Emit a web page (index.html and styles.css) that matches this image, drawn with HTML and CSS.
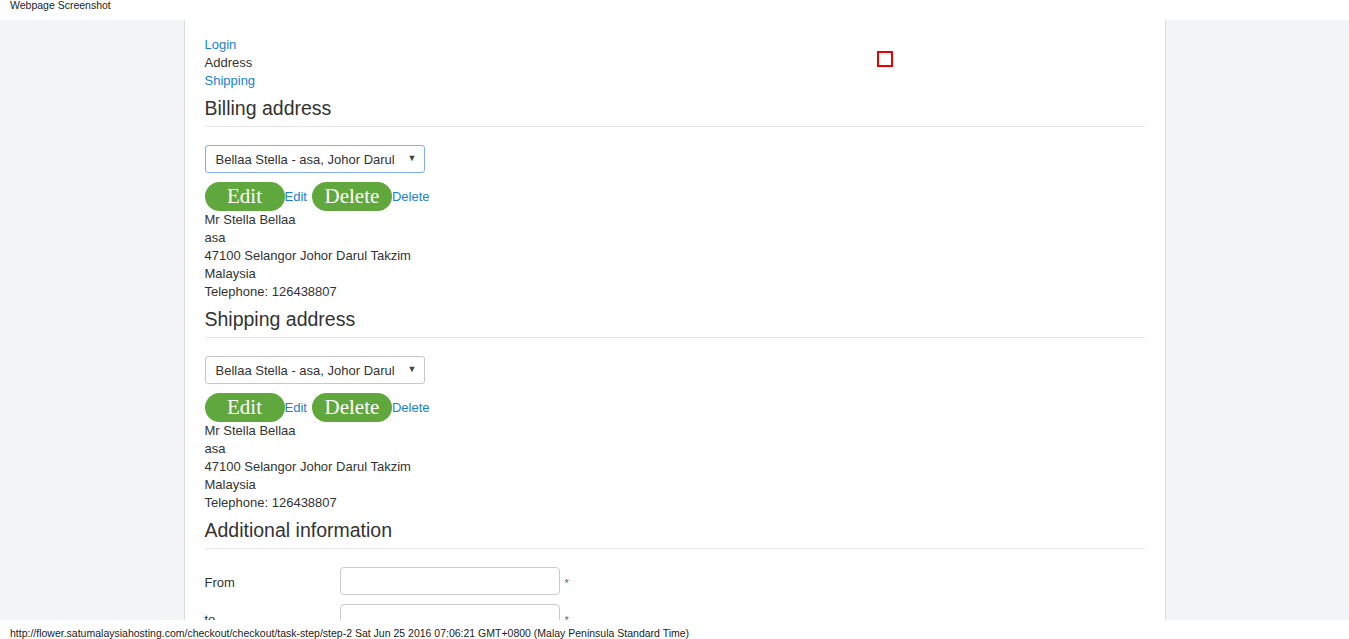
FILE: index.html
```html
<!DOCTYPE html>
<html>
<head>
    <title>Checkout - Address</title>
    <link rel="stylesheet" href="styles.css">
</head>
<body>
    <div class="topbar">Webpage Screenshot</div>

    <div class="viewport">
        <div class="panel">
            <span class="marker"></span>

            <div class="steps">
                <a href="#" class="step">Login</a>
                <span class="step current">Address</span>
                <a href="#" class="step">Shipping</a>
            </div>

            <h3 class="section-title">Billing address</h3>
            <div class="select-wrap">
                <select class="address-select focused">
                    <option>Bellaa Stella - asa, Johor Darul</option>
                </select>
            </div>
            <div class="actions">
                <button class="pill-button">Edit</button><a href="#" class="action-link">Edit</a>
                <button class="pill-button wide">Delete</button><a href="#" class="action-link">Delete</a>
            </div>
            <div class="address">
                <div>Mr Stella Bellaa</div>
                <div>asa</div>
                <div>47100 Selangor Johor Darul Takzim</div>
                <div>Malaysia</div>
                <div>Telephone: 126438807</div>
            </div>

            <h3 class="section-title">Shipping address</h3>
            <div class="select-wrap">
                <select class="address-select">
                    <option>Bellaa Stella - asa, Johor Darul</option>
                </select>
            </div>
            <div class="actions">
                <button class="pill-button">Edit</button><a href="#" class="action-link">Edit</a>
                <button class="pill-button wide">Delete</button><a href="#" class="action-link">Delete</a>
            </div>
            <div class="address">
                <div>Mr Stella Bellaa</div>
                <div>asa</div>
                <div>47100 Selangor Johor Darul Takzim</div>
                <div>Malaysia</div>
                <div>Telephone: 126438807</div>
            </div>

            <h3 class="section-title">Additional information</h3>
            <div class="form-row">
                <label class="form-label">From</label>
                <input type="text" class="form-input">
                <span class="required">*</span>
            </div>
            <div class="form-row">
                <label class="form-label">to</label>
                <input type="text" class="form-input">
                <span class="required">*</span>
            </div>
            <div class="form-row">
                <label class="form-label">Message</label>
                <input type="text" class="form-input">
            </div>
        </div>
    </div>

    <div class="statusbar">http://flower.satumalaysiahosting.com/checkout/checkout/task-step/step-2 Sat Jun 25 2016 07:06:21 GMT+0800 (Malay Peninsula Standard Time)</div>
</body>
</html>
```

FILE: styles.css
```css
body {
    margin: 0;
    font-family: 'Liberation Sans', Arial, sans-serif;
    color: #333333;
    background: #ffffff;
}

.topbar {
    height: 20px;
    padding-left: 10px;
    font-size: 10.5px;
    line-height: 11px;
    color: #222222;
}

.viewport {
    height: 600px;
    overflow: hidden;
    background: #f3f4f6;
    display: flex;
    justify-content: center;
}

.panel {
    position: relative;
    width: 940px;
    padding: 16px 20px 0 20px;
    background: #ffffff;
    border-left: 1px solid #dcdcdc;
    border-right: 1px solid #dcdcdc;
    font-size: 13px;
    line-height: 18px;
}

/* small red box floating at the top of the panel */
.marker {
    position: absolute;
    left: 692px;
    top: 31px;
    width: 12px;
    height: 12px;
    border: 2px solid #ee0000;
}

.steps {
    display: flex;
    flex-direction: column;
}

.step {
    color: #1a80d0;
    text-decoration: none;
}

.step.current {
    color: #333333;
}

.section-title {
    margin: 7px 0 18px 0;
    padding-bottom: 7px;
    border-bottom: 1px solid #e5e5e5;
    font-size: 19.5px;
    font-weight: normal;
    line-height: 22px;
}

.select-wrap {
    position: relative;
    width: 220px;
}

.select-wrap::after {
    content: '\25BC';
    position: absolute;
    right: 8px;
    top: 8px;
    font-size: 9px;
    line-height: 10px;
    color: #444444;
    pointer-events: none;
}

.address-select {
    appearance: none;
    -webkit-appearance: none;
    width: 220px;
    height: 28px;
    padding: 0 10px;
    border: 1px solid #c8c8c8;
    border-radius: 3px;
    background: #ffffff;
    font-family: 'Liberation Sans', Arial, sans-serif;
    font-size: 13px;
    color: #333333;
}

.address-select.focused {
    border-color: #85aef0;
}

.actions {
    display: flex;
    align-items: center;
    margin-top: 9px;
    height: 29px;
}

.pill-button {
    width: 80px;
    height: 29px;
    padding: 0;
    border: none;
    border-radius: 15px;
    background: #60a83d;
    color: #ffffff;
    font-family: 'Liberation Serif', 'Times New Roman', serif;
    font-size: 21px;
    line-height: 29px;
}

.action-link {
    margin-right: 5px;
    color: #1a80d0;
    text-decoration: none;
}

.address {
    display: flex;
    flex-direction: column;
}

.form-row {
    display: flex;
    align-items: center;
    margin-bottom: 9px;
}

.form-label {
    width: 135px;
    padding-top: 3px;
}

.form-input {
    box-sizing: border-box;
    width: 220px;
    height: 28px;
    border: 1px solid #cccccc;
    border-radius: 4px;
}

.required {
    margin-left: 5px;
    padding-top: 3px;
    font-size: 11px;
    color: #666666;
}

.statusbar {
    height: 19px;
    padding-left: 10px;
    font-size: 10.5px;
    line-height: 27px;
    white-space: nowrap;
    overflow: hidden;
    color: #222222;
}
```
